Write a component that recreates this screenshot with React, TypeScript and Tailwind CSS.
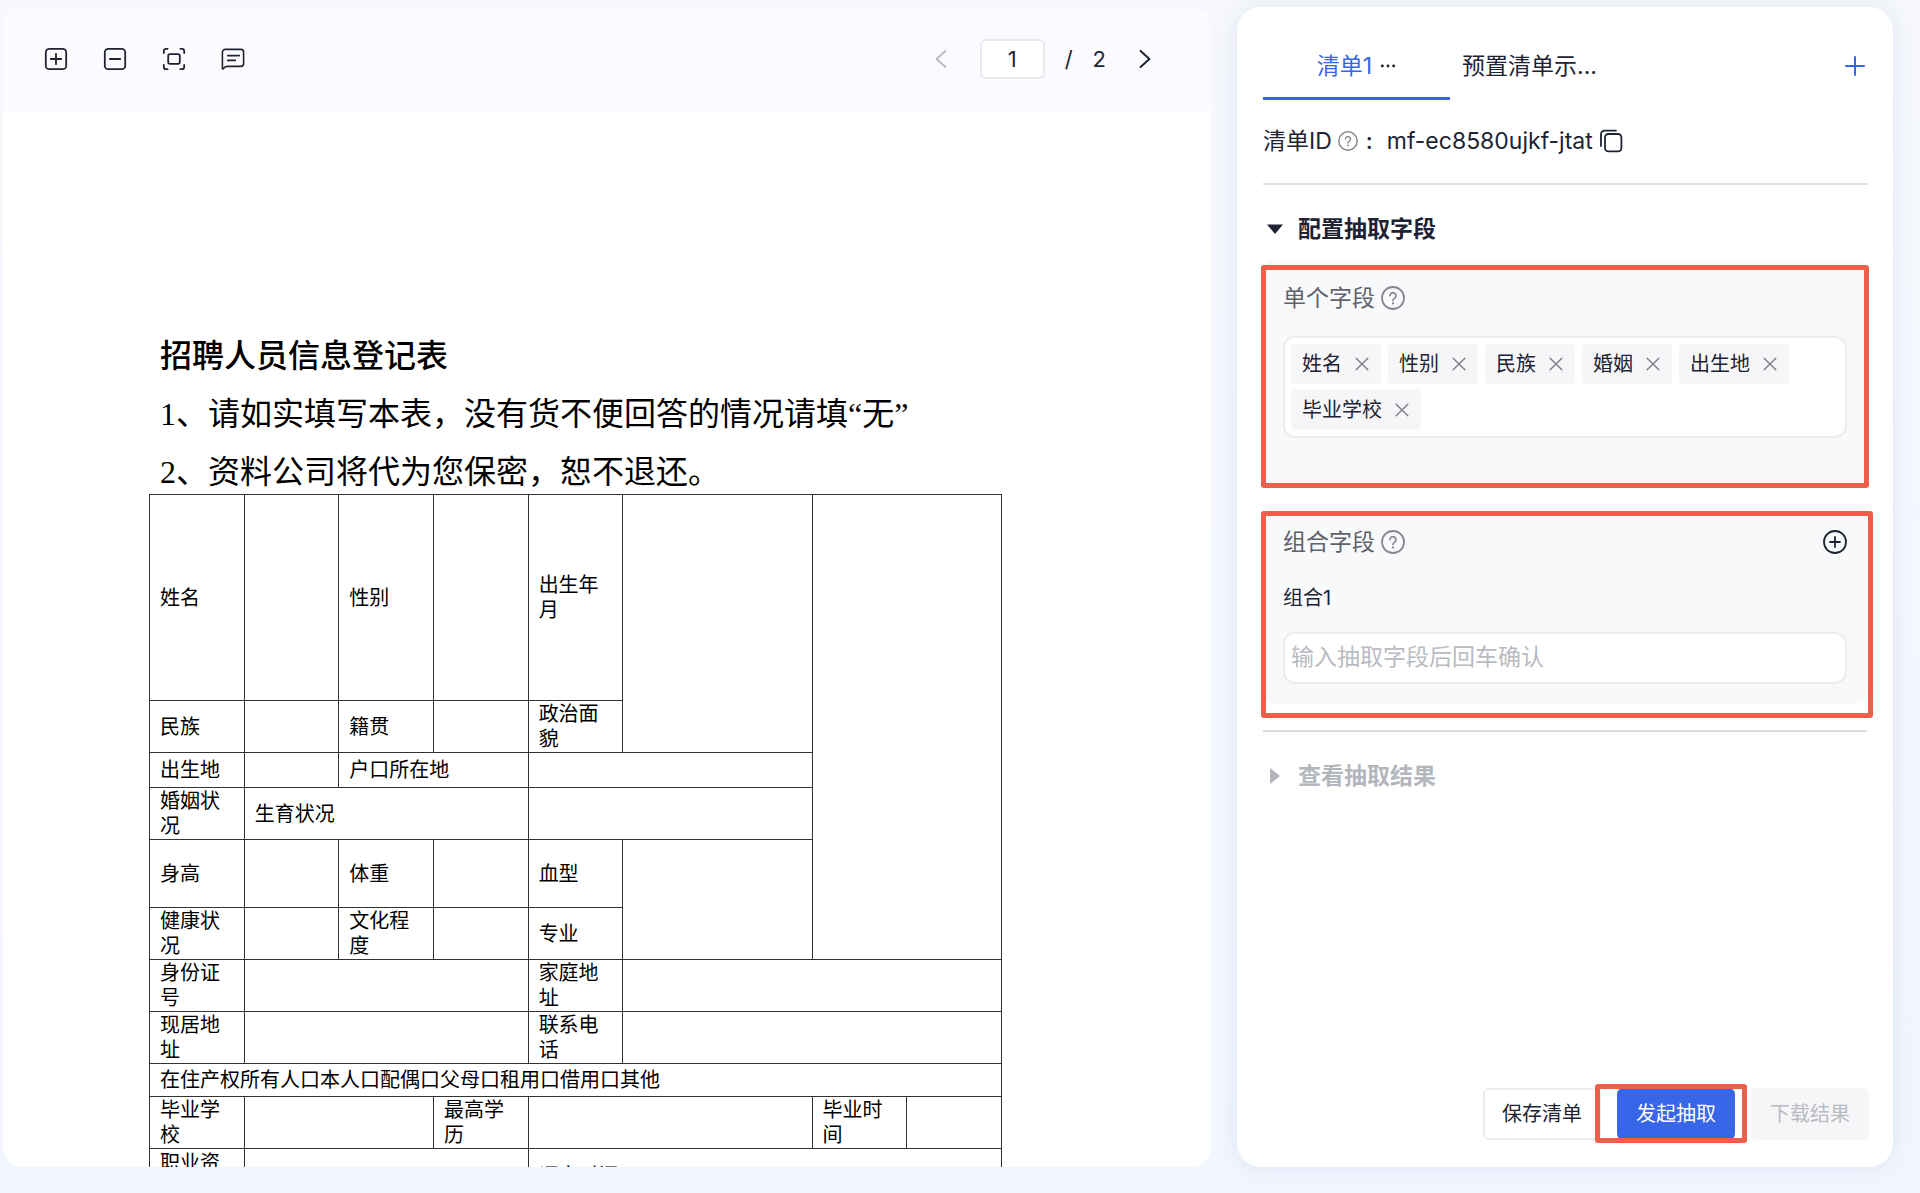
import { useState } from 'react'
import type { ReactNode } from 'react'

type Cell = { text?: string; cols?: number; rows?: number }
type FormRow = { height: string; cells: Cell[] }

const FORM_ROWS: FormRow[] = [
  {
    height: 'h-[206px]',
    cells: [
      { text: '姓名' },
      {},
      { text: '性别' },
      {},
      { text: '出生年月' },
      { cols: 2, rows: 2 },
      { cols: 2, rows: 6 },
    ],
  },
  { height: 'h-[52px]', cells: [{ text: '民族' }, {}, { text: '籍贯' }, {}, { text: '政治面貌' }] },
  { height: 'h-[35px]', cells: [{ text: '出生地' }, {}, { text: '户口所在地', cols: 2 }, { cols: 3 }] },
  { height: 'h-[52px]', cells: [{ text: '婚姻状况' }, { text: '生育状况', cols: 3 }, { cols: 3 }] },
  {
    height: 'h-[68px]',
    cells: [{ text: '身高' }, {}, { text: '体重' }, {}, { text: '血型' }, { cols: 2, rows: 2 }],
  },
  { height: 'h-[52px]', cells: [{ text: '健康状况' }, {}, { text: '文化程度' }, {}, { text: '专业' }] },
  { height: 'h-[52px]', cells: [{ text: '身份证号' }, { cols: 3 }, { text: '家庭地址' }, { cols: 4 }] },
  { height: 'h-[52px]', cells: [{ text: '现居地址' }, { cols: 3 }, { text: '联系电话' }, { cols: 4 }] },
  {
    height: 'h-[33px]',
    cells: [{ text: '在住产权所有人口本人口配偶口父母口租用口借用口其他', cols: 9 }],
  },
  {
    height: 'h-[52px]',
    cells: [
      { text: '毕业学校' },
      { cols: 2 },
      { text: '最高学历' },
      { cols: 3 },
      { text: '毕业时间' },
      {},
    ],
  },
  { height: 'h-[54px]', cells: [{ text: '职业资格' }, { cols: 3 }, { text: '评定时间', cols: 5 }] },
]

const INITIAL_FIELDS = ['姓名', '性别', '民族', '婚姻', '出生地', '毕业学校']

function Icon({ className, children }: { className: string; children: ReactNode }) {
  return (
    <svg
      viewBox="0 0 24 24"
      fill="none"
      stroke="currentColor"
      strokeLinecap="round"
      strokeLinejoin="round"
      aria-hidden="true"
      className={className}
    >
      {children}
    </svg>
  )
}

function HelpIcon({ className }: { className: string }) {
  return (
    <Icon className={className}>
      <circle cx="12" cy="12" r="11" strokeWidth="1.8" />
      <path d="M9 9.6a3 3 0 1 1 4.6 2.5c-1 .7-1.6 1.2-1.6 2.3" strokeWidth="1.7" />
      <circle cx="12" cy="17.4" r="1.1" fill="currentColor" stroke="none" />
    </Icon>
  )
}

// Red frame drawn over the parts of the page that the guide points at.
function Highlight({ className }: { className: string }) {
  return (
    <span
      aria-hidden="true"
      className={`pointer-events-none absolute rounded-[3px] border-[5px] border-[#ee5f4b] ${className}`}
    />
  )
}

function Toolbar() {
  const [page, setPage] = useState('1')

  return (
    <header className="flex h-[104px] shrink-0 items-center justify-between bg-[#fbfaff] pr-[54px] pl-[41px] text-[#1d2333]">
      <div className="flex items-center gap-[35px]">
        <button type="button" aria-label="放大">
          <Icon className="size-6">
            <rect x="1.8" y="1.8" width="20.4" height="20.4" rx="3.5" strokeWidth="1.8" />
            <path d="M12 6.8v10.4M6.8 12h10.4" strokeWidth="1.8" />
          </Icon>
        </button>
        <button type="button" aria-label="缩小">
          <Icon className="size-6">
            <rect x="1.8" y="1.8" width="20.4" height="20.4" rx="3.5" strokeWidth="1.8" />
            <path d="M6.8 12h10.4" strokeWidth="1.8" />
          </Icon>
        </button>
        <button type="button" aria-label="适应窗口">
          <Icon className="size-6">
            <path
              d="M1.8 6V4a2.2 2.2 0 0 1 2.2-2.2h1.6M18.4 1.8H20A2.2 2.2 0 0 1 22.2 4v2M22.2 18v2a2.2 2.2 0 0 1-2.2 2.2h-1.6M5.6 22.2H4A2.2 2.2 0 0 1 1.8 20v-2"
              strokeWidth="1.8"
            />
            <rect x="6.2" y="7.2" width="11.6" height="9.6" rx="1.8" strokeWidth="1.8" />
          </Icon>
        </button>
        <button type="button" aria-label="批注">
          <Icon className="size-6">
            <path
              d="M1.4 21.6V5.2a2.8 2.8 0 0 1 2.8-2.8h15.6a2.8 2.8 0 0 1 2.8 2.8v11.4a2.8 2.8 0 0 1-2.8 2.8H6.2c-1.4 0-2.4.6-3.2 1.6-.5.6-1.6 1.6-1.6.6z"
              strokeWidth="1.6"
            />
            <path d="M6.8 8.6h11.4M6.8 13.4h7.4" strokeWidth="1.8" />
          </Icon>
        </button>
      </div>
      <div className="flex items-center text-[22px]">
        <button type="button" aria-label="上一页" disabled className="text-[#b9bac2]">
          <Icon className="size-6">
            <path d="M16.4 4 7.6 12l8.8 8" strokeWidth="1.8" />
          </Icon>
        </button>
        <input
          aria-label="页码"
          value={page}
          onChange={(e) => setPage(e.target.value)}
          className="ml-[27px] h-10 w-[65px] rounded-md border-2 border-[#e9e9ee] bg-white text-center outline-none"
        />
        <span className="ml-5">/</span>
        <span className="ml-5">2</span>
        <button type="button" aria-label="下一页" className="ml-[27px]">
          <Icon className="size-6">
            <path d="m7.6 4 8.8 8-8.8 8" strokeWidth="2" />
          </Icon>
        </button>
      </div>
    </header>
  )
}

function RegistrationForm() {
  return (
    <article className="min-h-0 flex-1 overflow-hidden pt-[216px] pr-[209px] pl-[146px] font-['Liberation_Serif','Noto_Sans_CJK_SC',serif] text-black">
      <div className="pl-[11px] text-[32px] leading-[58px] whitespace-nowrap">
        <h1 className="font-medium">招聘人员信息登记表</h1>
        <p>1、请如实填写本表，没有货不便回答的情况请填“无”</p>
        <p>2、资料公司将代为您保密，恕不退还。</p>
      </div>
      <table className="-mt-[7px] w-full table-fixed border-collapse text-xl leading-[25px]">
        <colgroup>
          {Array.from({ length: 9 }, (_, i) => (
            <col key={i} />
          ))}
        </colgroup>
        <tbody>
          {FORM_ROWS.map((row, i) => (
            <tr key={i} className={row.height}>
              {row.cells.map((cell, j) => (
                <td
                  key={j}
                  colSpan={cell.cols}
                  rowSpan={cell.rows}
                  className="border border-[#333] px-2.5 pt-px pb-0 align-middle"
                >
                  {cell.text}
                </td>
              ))}
            </tr>
          ))}
        </tbody>
      </table>
    </article>
  )
}

function Tabs() {
  return (
    <nav className="flex items-start justify-between text-[23px] leading-8">
      <div className="flex items-start">
        <div className="flex h-14 w-[187px] items-start justify-center gap-2 border-b-[3px] border-[#3866e8] pt-1.5">
          <button type="button" className="text-[#3866e8]">
            清单1
          </button>
          <button type="button" aria-label="更多操作" className="flex h-8 items-center">
            <Icon className="size-4">
              <g fill="currentColor" stroke="none">
                <circle cx="3.5" cy="12" r="2.2" />
                <circle cx="12" cy="12" r="2.2" />
                <circle cx="20.5" cy="12" r="2.2" />
              </g>
            </Icon>
          </button>
        </div>
        <button type="button" className="ml-3 pt-1.5">
          预置清单示...
        </button>
      </div>
      <button type="button" aria-label="新建清单" className="flex h-11 items-center text-[#3866e8]">
        <Icon className="size-6">
          <path d="M12 3v18M3 12h18" strokeWidth="2" />
        </Icon>
      </button>
    </nav>
  )
}

function FieldTag({ label, onRemove }: { label: string; onRemove: () => void }) {
  return (
    <li className="flex h-10 items-center gap-[13px] rounded bg-[#f6f6f9] pr-3 pl-[11px]">
      {label}
      <button type="button" aria-label={`移除${label}`} onClick={onRemove} className="text-[#7b7e88]">
        <Icon className="size-3.5">
          <path d="m2 2 20 20M22 2 2 22" strokeWidth="2.4" />
        </Icon>
      </button>
    </li>
  )
}

function SingleFields() {
  const [fields, setFields] = useState(INITIAL_FIELDS)

  return (
    <section className="relative mt-[15px] h-[226px] rounded-xl bg-[#f8f9fb] px-5 pt-[22px]">
      <h3 className="flex items-center gap-1.5 text-[23px] leading-8 text-[#5f626b]">
        单个字段
        <HelpIcon className="size-6 text-[#85878f]" />
      </h3>
      <ul className="mt-[22px] flex flex-wrap gap-x-[7px] gap-y-1.5 rounded-xl border-2 border-[#ebecef] bg-white p-1.5 text-xl">
        {fields.map((field) => (
          <FieldTag
            key={field}
            label={field}
            onRemove={() => setFields(fields.filter((f) => f !== field))}
          />
        ))}
      </ul>
      <Highlight className="-inset-x-0.5 top-[5px] -bottom-0.5" />
    </section>
  )
}

function GroupFields() {
  return (
    <section className="relative mt-[18px] rounded-xl bg-[#f8f9fb] px-5 pt-[22px] pb-5">
      <div className="flex items-center justify-between">
        <h3 className="flex items-center gap-1.5 text-[23px] leading-8 text-[#5f626b]">
          组合字段
          <HelpIcon className="size-6 text-[#85878f]" />
        </h3>
        <button type="button" aria-label="添加组合">
          <Icon className="size-6">
            <circle cx="12" cy="12" r="11" strokeWidth="1.8" />
            <path d="M12 7v10M7 12h10" strokeWidth="1.8" />
          </Icon>
        </button>
      </div>
      <label htmlFor="group-1" className="mt-6 block text-xl leading-8">
        组合1
      </label>
      <input
        id="group-1"
        type="text"
        placeholder="输入抽取字段后回车确认"
        className="mt-[18px] block h-[52px] w-full rounded-xl border-2 border-[#ebecef] bg-white px-1.5 pb-0.5 text-[23px] outline-none placeholder:text-[#b9bbc2]"
      />
      <Highlight className="-right-1.5 -bottom-[14px] -left-0.5 top-[7px]" />
    </section>
  )
}

function ExtractPanel() {
  return (
    <aside className="flex w-[656px] shrink-0 flex-col rounded-[24px] bg-white px-[26px] pt-[37px] pb-[27px] text-[#1d2333] shadow-[0_0_24px_rgba(60,80,140,0.1)]">
      <Tabs />
      <div className="flex items-center border-b-2 border-[#dcdde0] pt-[23px] pb-[24px] text-[23px] leading-9">
        清单ID
        <HelpIcon className="ml-1.5 size-5 text-[#85878f]" />
        <span className="mr-3.5 ml-2 font-medium">:</span>
        mf-ec8580ujkf-jtat
        <button type="button" aria-label="复制" className="ml-1.5">
          <Icon className="size-6">
            <rect x="6" y="5" width="16.4" height="17.4" rx="3.4" strokeWidth="1.8" />
            <path d="M2 17V5.4A3.6 3.6 0 0 1 5.6 1.6H17" strokeWidth="1.8" />
          </Icon>
        </button>
      </div>
      <h2 className="mt-7">
        <button
          type="button"
          aria-expanded="true"
          className="flex items-center text-[23px] leading-8 font-bold"
        >
          <Icon className="mr-[11px] size-6">
            <path d="M4 7.5h16l-8 9.5z" fill="currentColor" stroke="none" />
          </Icon>
          配置抽取字段
        </button>
      </h2>
      <SingleFields />
      <GroupFields />
      <h2 className="mt-[26px] border-t-2 border-[#dcdde0] pt-7">
        <button
          type="button"
          aria-expanded="false"
          className="flex items-center text-[23px] leading-8 font-bold text-[#b4b6bd]"
        >
          <Icon className="mr-[11px] size-6">
            <path d="M7 4v16l10-8z" fill="currentColor" stroke="none" />
          </Icon>
          查看抽取结果
        </button>
      </h2>
      <footer className="-mr-0.5 mt-auto flex justify-end gap-4 text-xl">
        <button type="button" className="h-[52px] w-[118px] rounded-md border-2 border-[#ebebee]">
          保存清单
        </button>
        <div className="relative">
          <button type="button" className="h-[52px] w-[118px] rounded-md bg-[#3866e8] text-white">
            发起抽取
          </button>
          <Highlight className="-top-1 -right-3 -bottom-[3px] -left-[22px]" />
        </div>
        <button
          type="button"
          disabled
          className="h-[52px] w-[118px] rounded-md bg-[#f6f6f9] text-[#b9bbc2]"
        >
          下载结果
        </button>
      </footer>
    </aside>
  )
}

export default function App() {
  return (
    <div className="flex h-screen gap-[26px] overflow-hidden bg-linear-to-b from-[#f6f8fd] to-[#f1f6ff] pt-[7px] pr-[27px] pb-[26px] pl-[3px] font-['Inter','Noto_Sans_CJK_SC',sans-serif]">
      <main className="flex min-w-0 flex-1 flex-col overflow-hidden rounded-[20px] bg-white">
        <Toolbar />
        <RegistrationForm />
      </main>
      <ExtractPanel />
    </div>
  )
}
